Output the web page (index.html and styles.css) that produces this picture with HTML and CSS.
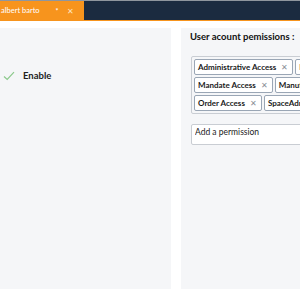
FILE: index.html
```html
<!DOCTYPE html>
<html lang="en">
<head>
    <meta charset="UTF-8">
    <meta name="viewport" content="width=device-width, initial-scale=1.0">
    <title>User Permissions</title>
    <link rel="stylesheet" href="styles.css">
</head>
<body>
    <div class="topbar">
        <div class="tab">
            <span class="tab-title">albert barto</span>
            <span class="tab-dirty">*</span>
            <span class="tab-close">&#x2715;</span>
        </div>
    </div>

    <div class="main">
        <div class="panel left">
            <div class="toggle-row">
                <svg class="check" width="12" height="10" viewBox="0 0 12 10">
                    <path d="M1 5.5 L4.2 8.5 L11 1.2" fill="none" stroke="#8cc98c" stroke-width="1.2"/>
                </svg>
                <span class="toggle-label">Enable</span>
            </div>
        </div>

        <div class="panel right">
            <h2 class="perm-title">User acount pemissions :</h2>
            <div class="tag-box">
                <div class="tag-row">
                    <span class="tag">Administrative Access <span class="tag-x">&#x2715;</span></span>
                    <span class="tag">Dashboard Access <span class="tag-x">&#x2715;</span></span>
                </div>
                <div class="tag-row">
                    <span class="tag">Mandate Access <span class="tag-x">&#x2715;</span></span>
                    <span class="tag">Manufacturer Access <span class="tag-x">&#x2715;</span></span>
                </div>
                <div class="tag-row">
                    <span class="tag">Order Access <span class="tag-x">&#x2715;</span></span>
                    <span class="tag">SpaceAdmin Access <span class="tag-x">&#x2715;</span></span>
                </div>
            </div>
            <input class="perm-input" type="text" placeholder="Add a permission">
        </div>
    </div>
</body>
</html>
```

FILE: styles.css
```css
body {
    margin: 0;
    width: 300px;
    height: 300px;
    overflow: hidden;
    background-color: white;
    font-family: Lato, "Liberation Sans", sans-serif;
}

.topbar {
    height: 19px;
    border-top: 1px solid #8f969e;
    border-bottom: 1px solid #f7941d;
    background-color: #1b2b40;
    display: flex;
}

.tab {
    width: 84px;
    background-color: #f7941d;
    color: white;
    font-size: 7.5px;
    display: flex;
    align-items: center;
    white-space: nowrap;
}

.tab-title {
    padding-left: 1px;
}

.tab-dirty {
    margin-left: 16px;
    font-size: 7px;
}

.tab-close {
    margin-left: 8px;
    font-size: 8px;
    color: #fde2bd;
}

.main {
    display: flex;
    gap: 10px;
    padding-top: 7px;
}

.panel {
    height: 261px;
    background-color: #f5f6f8;
    flex-shrink: 0;
}

.left {
    width: 171px;
}

.right {
    width: 300px;
    padding: 3px 0 0 9px;
    box-sizing: border-box;
}

.toggle-row {
    display: flex;
    align-items: center;
    margin-top: 42px;
    padding-left: 3px;
}

.check {
    margin-right: 8px;
}

.toggle-label {
    font-size: 9.5px;
    font-weight: bold;
    color: #222;
}

.perm-title {
    margin: 0 0 14px 0;
    font-size: 9.5px;
    font-weight: bold;
    color: #111;
    white-space: nowrap;
}

.tag-box {
    border: 1px solid #c9cdd3;
    border-radius: 2px;
    background-color: #f5f6f8;
    padding: 2px;
    display: flex;
    flex-direction: column;
    gap: 2px;
    margin-left: 1px;
}

.tag-row {
    display: flex;
    gap: 2px;
}

.tag {
    height: 16px;
    box-sizing: border-box;
    border: 1px solid #9aa6b5;
    border-radius: 2px;
    background-color: white;
    padding: 0 4px 0 3px;
    font-size: 8px;
    font-weight: bold;
    color: #1a1a1a;
    display: flex;
    align-items: center;
    white-space: nowrap;
}

.tag-x {
    margin-left: 5px;
    font-weight: normal;
    color: #8a8f96;
}

.perm-input {
    display: block;
    margin: 10px 0 0 1px;
    width: 200px;
    height: 21px;
    box-sizing: border-box;
    border: 1px solid #c9cdd3;
    border-radius: 2px;
    padding: 0 3px 6px 3px;
    font-family: Lato, "Liberation Sans", sans-serif;
    font-size: 8.5px;
}

.perm-input::placeholder {
    color: #222;
}
```
